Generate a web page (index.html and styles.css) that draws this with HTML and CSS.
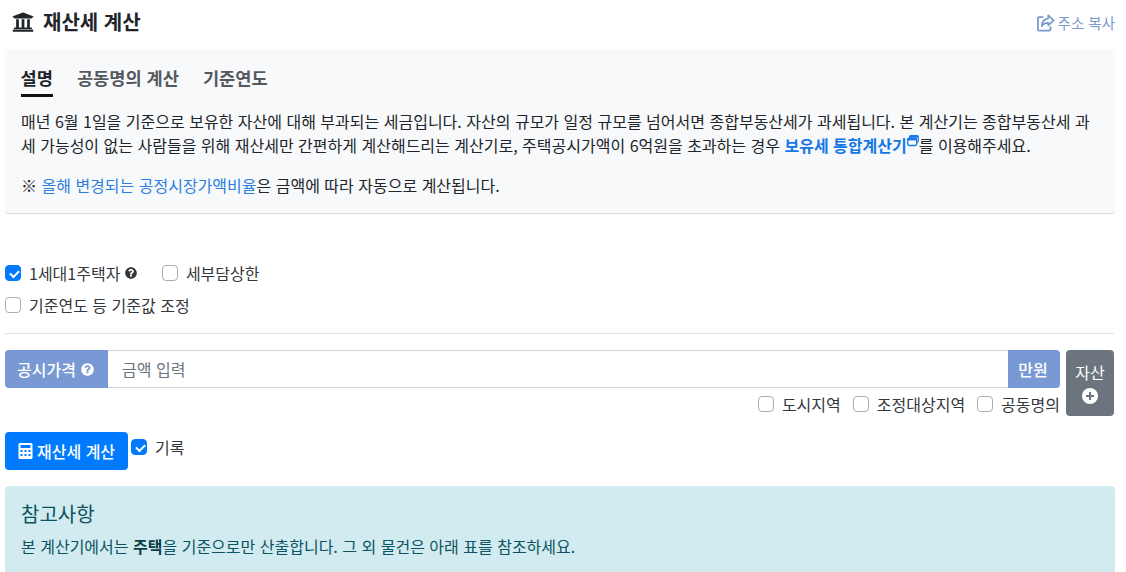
FILE: index.html
```html
<!DOCTYPE html>
<html lang="ko">
<head>
<meta charset="utf-8">
<title>재산세 계산</title>
<link rel="stylesheet" href="styles.css">
</head>
<body>
<main class="page">
  <header class="head">
    <h1 class="title">
      <svg class="bank" viewBox="0 0 512 512"><path d="M496 128v16a8 8 0 0 1-8 8h-24v12c0 6.627-5.373 12-12 12H60c-6.627 0-12-5.373-12-12v-12H24a8 8 0 0 1-8-8v-16a8 8 0 0 1 4.941-7.392l232-88a7.996 7.996 0 0 1 6.118 0l232 88A8 8 0 0 1 496 128zm-24 304H40c-13.255 0-24 10.745-24 24v16a8 8 0 0 0 8 8h464a8 8 0 0 0 8-8v-16c0-13.255-10.745-24-24-24zM96 192v192H60c-6.627 0-12 5.373-12 12v20h416v-20c0-6.627-5.373-12-12-12h-36V192h-64v192h-64V192h-64v192h-64V192H96z"/></svg>
      재산세 계산
    </h1>
    <a class="copy">
      <svg class="share" viewBox="0 0 20 20"><path d="M12.500 1.500l6 5.500-6 5.500V9.800c-3.500 0-5.500 1-7 3.700 0-4.500 2.500-8 7-9z" fill="none" stroke="currentColor" stroke-width="2" stroke-linejoin="round"/><path d="M7 3.500H2.500A1.500 1.500 0 0 0 1 5v12a1.500 1.500 0 0 0 1.500 1.500h11A1.500 1.500 0 0 0 15 17v-3" fill="none" stroke="currentColor" stroke-width="2"/></svg>
      주소 복사
    </a>
  </header>

  <section class="info">
    <nav class="tabs">
      <span class="tab active">설명</span>
      <span class="tab">공동명의 계산</span>
      <span class="tab">기준연도</span>
    </nav>
    <p class="desc">매년 6월 1일을 기준으로 보유한 자산에 대해 부과되는 세금입니다. 자산의 규모가 일정 규모를 넘어서면 종합부동산세가 과세됩니다. 본 계산기는 종합부동산세 과세 가능성이 없는 사람들을 위해 재산세만 간편하게 계산해드리는 계산기로, 주택공시가액이 6억원을 초과하는 경우 <a class="strong-link">보유세 통합계산기<svg class="popup" viewBox="0 0 12 12"><rect x="2.500" y="0.700" width="8.800" height="6.500" rx="1.500" fill="none" stroke="currentColor" stroke-width="1.200"/><rect x="2.500" y="0.700" width="8.800" height="2" fill="currentColor"/><rect x="0.700" y="3.200" width="9" height="7.300" rx="1.500" fill="#f8f9fb" stroke="currentColor" stroke-width="1.300"/><rect x="0.700" y="3.200" width="9" height="2.200" fill="currentColor"/></svg></a>를 이용해주세요.</p>
    <p class="note">※ <a class="link">올해 변경되는 공정시장가액비율</a>은 금액에 따라 자동으로 계산됩니다.</p>
  </section>

  <div class="options">
    <div class="opt-row">
      <label class="check"><span class="box on"></span>1세대1주택자<svg class="qmark" viewBox="0 0 512 512"><path d="M504 256c0 137-111 248-248 248S8 393 8 256 119 8 256 8s248 111 248 248zM262 90c-54 0-89 23-116 63-4 5-3 12 3 16l34 26c5 4 13 3 17-2 18-22 30-35 57-35 20 0 45 13 45 33 0 15-13 23-33 34-24 14-56 31-56 73v4c0 7 5 12 12 12h56c7 0 12-5 12-12v-1c0-30 85-31 85-110 0-60-62-101-116-101zm-6 234c-24 0-44 20-44 44s20 44 44 44 44-20 44-44-20-44-44-44z"/></svg></label>
      <label class="check"><span class="box"></span>세부담상한</label>
    </div>
    <div class="opt-row">
      <label class="check"><span class="box"></span>기준연도 등 기준값 조정</label>
    </div>
  </div>

  <hr class="rule">

  <div class="price-row">
    <div class="price-main">
      <div class="group">
        <span class="addon left">공시가격<svg class="qmark" viewBox="0 0 512 512"><path d="M504 256c0 137-111 248-248 248S8 393 8 256 119 8 256 8s248 111 248 248zM262 90c-54 0-89 23-116 63-4 5-3 12 3 16l34 26c5 4 13 3 17-2 18-22 30-35 57-35 20 0 45 13 45 33 0 15-13 23-33 34-24 14-56 31-56 73v4c0 7 5 12 12 12h56c7 0 12-5 12-12v-1c0-30 85-31 85-110 0-60-62-101-116-101zm-6 234c-24 0-44 20-44 44s20 44 44 44 44-20 44-44-20-44-44-44z"/></svg></span>
        <input class="amount" type="text" placeholder="금액 입력">
        <span class="addon right">만원</span>
      </div>
      <div class="sub-opts">
        <label class="check"><span class="box"></span>도시지역</label>
        <label class="check"><span class="box"></span>조정대상지역</label>
        <label class="check"><span class="box"></span>공동명의</label>
      </div>
    </div>
    <button class="asset" type="button">자산
      <svg class="plus" viewBox="0 0 16 16"><circle cx="8" cy="8" r="8" fill="#fff"/><path d="M8 4v8M4 8h8" stroke="#6c757d" stroke-width="2"/></svg>
    </button>
  </div>

  <div class="submit-row">
    <button class="calc" type="button">
      <svg class="calc-ico" viewBox="0 0 448 512"><path fill-rule="evenodd" d="M48 0h352a48 48 0 0 1 48 48v416a48 48 0 0 1-48 48H48a48 48 0 0 1-48-48V48A48 48 0 0 1 48 0zm16 64v96h320V64zm0 160v64h64v-64zm128 0v64h64v-64zm128 0v64h64v-64zM64 352v64h64v-64zm128 0v64h64v-64zm128 0v64h64v-64z"/></svg>
      재산세 계산</button>
    <label class="check tall"><span class="box on"></span>기록</label>
  </div>

  <section class="alert">
    <h2 class="alert-title">참고사항</h2>
    <p class="alert-text">본 계산기에서는 <b>주택</b>을 기준으로만 산출합니다. 그 외 물건은 아래 표를 참조하세요.</p>
  </section>
</main>
</body>
</html>
```
FILE: styles.css
```css
* { box-sizing: border-box; }
html, body { margin: 0; height: 572px; overflow: hidden; background: #fff; }
body { font-family: "Noto Sans CJK KR", "Noto Sans", sans-serif; font-size: 16px; line-height: 24px; color: #212529; }
.page { padding: 0 12px 0 5px; }

.head { display: flex; justify-content: space-between; align-items: center; height: 49px; padding-left: 7px; margin-right: -1px; }
.title { display: flex; align-items: center; gap: 9px; margin: 0; font-size: 20px; font-weight: 700; line-height: 30px; padding-bottom: 6px; }
.bank { width: 22px; height: 22px; fill: #212529; }
.copy { display: flex; align-items: center; gap: 3px; color: #7a99cf; font-size: 14.500px; padding-bottom: 3px; }
.share { width: 18px; height: 18px; }

.info { background: #f8f9fb; border-radius: 4px; box-shadow: 0 1px 1px rgba(0,0,0,.15); padding: 12px 16px 0; height: 164px; margin-right: -1px; }
.tabs { display: flex; gap: 24px; margin-left: -0.500px; }
.tab { font-size: 17.600px; font-weight: 700; color: #55595e; height: 36px; line-height: 34px; }
.tab.active { color: #212529; border-bottom: 3px solid #111; }
.desc { margin: 12px 0 0; }
.note { margin: 16px 0 0; }
.link { color: #2c7fe0; }
.strong-link { color: #1477e6; font-weight: 700; }
.popup { width: 12px; height: 12px; vertical-align: 5px; }

.options { margin-top: 44px; }
.opt-row { display: flex; gap: 24.500px; height: 32px; align-items: center; }
.check { display: inline-flex; align-items: center; color: #33383d; white-space: nowrap; }
.tall { height: 30px; }
.box { width: 16px; height: 16px; border: 1px solid #a9aeb3; border-radius: 4px; background: #fff; margin-right: 8px; flex: none; position: relative; }
.box.on { background: #007bff; border-color: #007bff; }
.box.on::after { content: ""; position: absolute; left: 3.500px; top: 3.500px; width: 7px; height: 4px; border-left: 2.500px solid #fff; border-bottom: 2.500px solid #fff; transform: rotate(-45deg); }
.qmark { width: 12px; height: 12px; margin-left: 5px; fill: currentColor; }

.rule { border: 0; border-top: 1px solid #e2e3e5; margin: 12px 0 16px; }

.price-row { display: flex; gap: 6px; }
.price-main { flex: 1; min-width: 0; }
.group { display: flex; height: 38px; }
.addon { display: flex; align-items: center; background: #7899d4; color: #fff; font-weight: 500; padding: 0 10px; }
.addon.left { width: 103px; padding-left: 12px; border-radius: 4px 0 0 4px; white-space: nowrap; }
.addon.left .qmark { width: 13px; height: 13px; margin-left: 5px; }
.addon.right { width: 52px; justify-content: center; padding: 0 2px 0 0; border-radius: 0 4px 4px 0; }
.amount { flex: 1; min-width: 0; border: 1px solid #ced4da; border-width: 1px 0; padding: 0 14px; font: inherit; color: #495057; outline: 0; }
.amount::placeholder { color: #6c757d; opacity: 1; }
.sub-opts { display: flex; justify-content: flex-end; gap: 12px; height: 28px; padding-top: 4px; align-items: flex-start; }
.asset { width: 48px; height: 66px; background: #6c757d; color: #fff; border: 0; border-radius: 4px; font: inherit; padding: 0 0 3px; display: flex; flex-direction: column; align-items: center; justify-content: center; gap: 4px; }
.plus { width: 16px; height: 16px; }

.submit-row { display: flex; align-items: flex-start; gap: 3px; margin-top: 16px; }
.calc { display: flex; align-items: center; gap: 4px; height: 38px; width: 123px; justify-content: flex-start; padding: 0 0 0 13px; background: #007bff; color: #fff; border: 0; border-radius: 4px; font: inherit; font-weight: 500; }
.calc-ico { width: 15px; height: 16px; fill: #fff; }

.alert { margin: 16px -1px 0 0; background: #d1ebf0; border-radius: 4px; padding: 13px 16px; height: 100px; }
.alert-title { margin: 0; font-size: 20px; font-weight: 400; line-height: 30px; color: #0c5460; }
.alert-text { margin: 5px 0 0; color: #0c5460; }
.alert-text b { font-weight: 700; color: #0c3f49; }
```
